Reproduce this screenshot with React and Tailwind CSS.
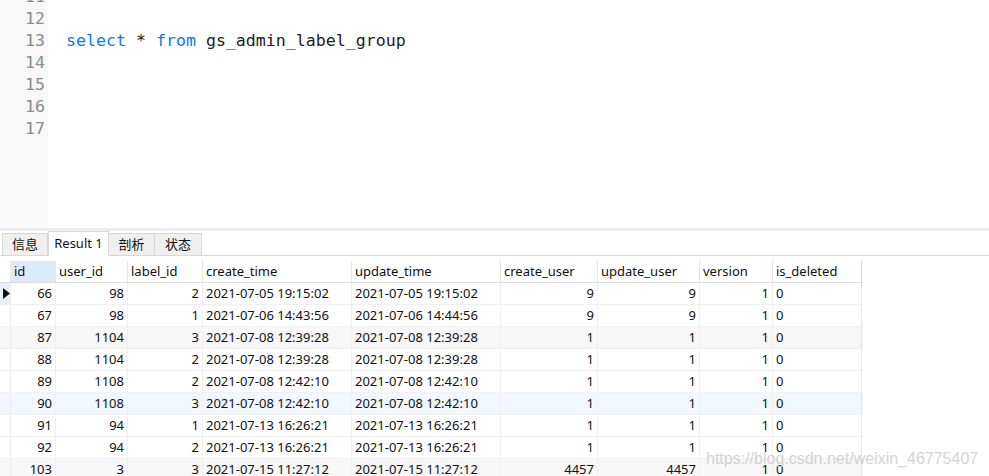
const FONT = { fontFamily: '"Noto Sans", "Noto Sans CJK SC", sans-serif' }
const MONO = { fontFamily: '"DejaVu Sans Mono", "Liberation Mono", monospace' }

const columns = [
  { key: "id", label: "id", align: "right" },
  { key: "user_id", label: "user_id", align: "right" },
  { key: "label_id", label: "label_id", align: "right" },
  { key: "create_time", label: "create_time", align: "left" },
  { key: "update_time", label: "update_time", align: "left" },
  { key: "create_user", label: "create_user", align: "right" },
  { key: "update_user", label: "update_user", align: "right" },
  { key: "version", label: "version", align: "right" },
  { key: "is_deleted", label: "is_deleted", align: "left" },
]

const rows = [
  ["66", "98", "2", "2021-07-05 19:15:02", "2021-07-05 19:15:02", "9", "9", "1", "0"],
  ["67", "98", "1", "2021-07-06 14:43:56", "2021-07-06 14:44:56", "9", "9", "1", "0"],
  ["87", "1104", "3", "2021-07-08 12:39:28", "2021-07-08 12:39:28", "1", "1", "1", "0"],
  ["88", "1104", "2", "2021-07-08 12:39:28", "2021-07-08 12:39:28", "1", "1", "1", "0"],
  ["89", "1108", "2", "2021-07-08 12:42:10", "2021-07-08 12:42:10", "1", "1", "1", "0"],
  ["90", "1108", "3", "2021-07-08 12:42:10", "2021-07-08 12:42:10", "1", "1", "1", "0"],
  ["91", "94", "1", "2021-07-13 16:26:21", "2021-07-13 16:26:21", "1", "1", "1", "0"],
  ["92", "94", "2", "2021-07-13 16:26:21", "2021-07-13 16:26:21", "1", "1", "1", "0"],
  ["103", "3", "3", "2021-07-15 11:27:12", "2021-07-15 11:27:12", "4457", "4457", "1", "0"],
]

const rowBg = ["bg-white", "bg-white", "bg-[#f7f7f7]", "bg-white", "bg-white", "bg-[#f2f7fd]", "bg-white", "bg-white", "bg-[#f7f7f7]"]

const gridCols = "grid grid-cols-[11px_45px_72px_75px_149px_149px_97px_102px_73px_89px]"

function Editor() {
  const lines = [11, 12, 13, 14, 15, 16, 17, 18, 19]
  return (
    <div className="flex h-[228px] overflow-hidden bg-white" style={MONO}>
      <div className="w-[48px] shrink-0 bg-[#f8f8f8] -mt-[14px]">
        {lines.map((n) => (
          <div key={n} className="h-[22px] leading-[22px] text-right pr-[3px] text-[16.6px] text-[#8c8c8c]">
            {n <= 17 ? n : ""}
          </div>
        ))}
      </div>
      <div className="flex-1 -mt-[14px] pl-[18px]">
        {lines.map((n) => (
          <div key={n} className="h-[22px] leading-[22px] text-[16.6px] text-[#222] whitespace-pre">
            {n === 13 ? (
              <>
                <span className="text-[#1478e8]">select</span>
                <span> * </span>
                <span className="text-[#1478e8]">from</span>
                <span> gs_admin_label_group</span>
              </>
            ) : (
              ""
            )}
          </div>
        ))}
      </div>
    </div>
  )
}

function Tabs() {
  const tabs = [
    { label: "信息", w: "w-[46px]" },
    { label: "Result 1", w: "w-[61px]", active: true },
    { label: "剖析", w: "w-[46px]" },
    { label: "状态", w: "w-[47px]" },
  ]
  return (
    <div className="h-[25px] border-b border-[#d8d8d8] flex items-end pl-[2px] bg-white">
      {tabs.map((t) =>
        t.active ? (
          <div
            key={t.label}
            className={`${t.w} h-[25px] -mb-px bg-white border border-[#d8d8d8] border-b-white flex items-center justify-center text-[13px] text-[#111]`}
          >
            {t.label}
          </div>
        ) : (
          <div
            key={t.label}
            className={`${t.w} h-[23px] bg-[#f0f0f0] border border-[#d8d8d8] border-l-0 first:border-l flex items-center justify-center text-[13px] text-[#111] -mb-px`}
          >
            {t.label}
          </div>
        )
      )}
    </div>
  )
}

function Grid() {
  return (
    <div className="pt-[5px] w-[863px]">
      <div className={`${gridCols} h-[22px] border-b border-[#dcdcdc]`}>
        <div className="border-r border-[#ececec] bg-white" />
        {columns.map((c, i) => (
          <div
            key={c.key}
            className={`border-r ${i === columns.length - 1 ? "border-[#d6d6d6]" : "border-[#e4e4e4]"} ${
              i === 0 ? "bg-[#dce9f7]" : "bg-white"
            } px-[3px] text-[13px] leading-[21px] text-[#111] truncate`}
          >
            {c.label}
          </div>
        ))}
      </div>
      {rows.map((r, ri) => (
        <div key={ri} className={`${gridCols} h-[22px] border-b border-[#f0f0f0] ${rowBg[ri]}`}>
          <div className={`border-r border-[#ececec] flex items-center pl-[3px] ${ri === 0 ? "bg-[#eaf0f8]" : ""}`}>
            {ri === 0 && (
              <svg width="7" height="11" viewBox="0 0 7 11">
                <path d="M0 0 L7 5.5 L0 11 Z" fill="#111" />
              </svg>
            )}
          </div>
          {r.map((v, ci) => (
            <div
              key={ci}
              className={`border-r ${ci === r.length - 1 ? "border-[#e4e4e4]" : "border-[#f0f0f0]"} px-[3px] text-[13px] leading-[21px] text-[#111] whitespace-nowrap overflow-hidden ${
                columns[ci].align === "right" ? "text-right" : "text-left"
              }`}
            >
              {v}
            </div>
          ))}
        </div>
      ))}
    </div>
  )
}

export default function App() {
  return (
    <div className="relative w-[989px] h-[476px] overflow-hidden bg-white" style={FONT}>
      <Editor />
      <div className="h-[3px] bg-[#eeeeee]" />
      <Tabs />
      <Grid />
      <div
        className="absolute left-[706px] top-[447px] text-[16px] text-[#cfcfcf] opacity-90 whitespace-nowrap"
        style={{ fontFamily: '"Liberation Sans", Arial, sans-serif' }}
      >
        https://blog.csdn.net/weixin_46775407
      </div>
    </div>
  )
}
